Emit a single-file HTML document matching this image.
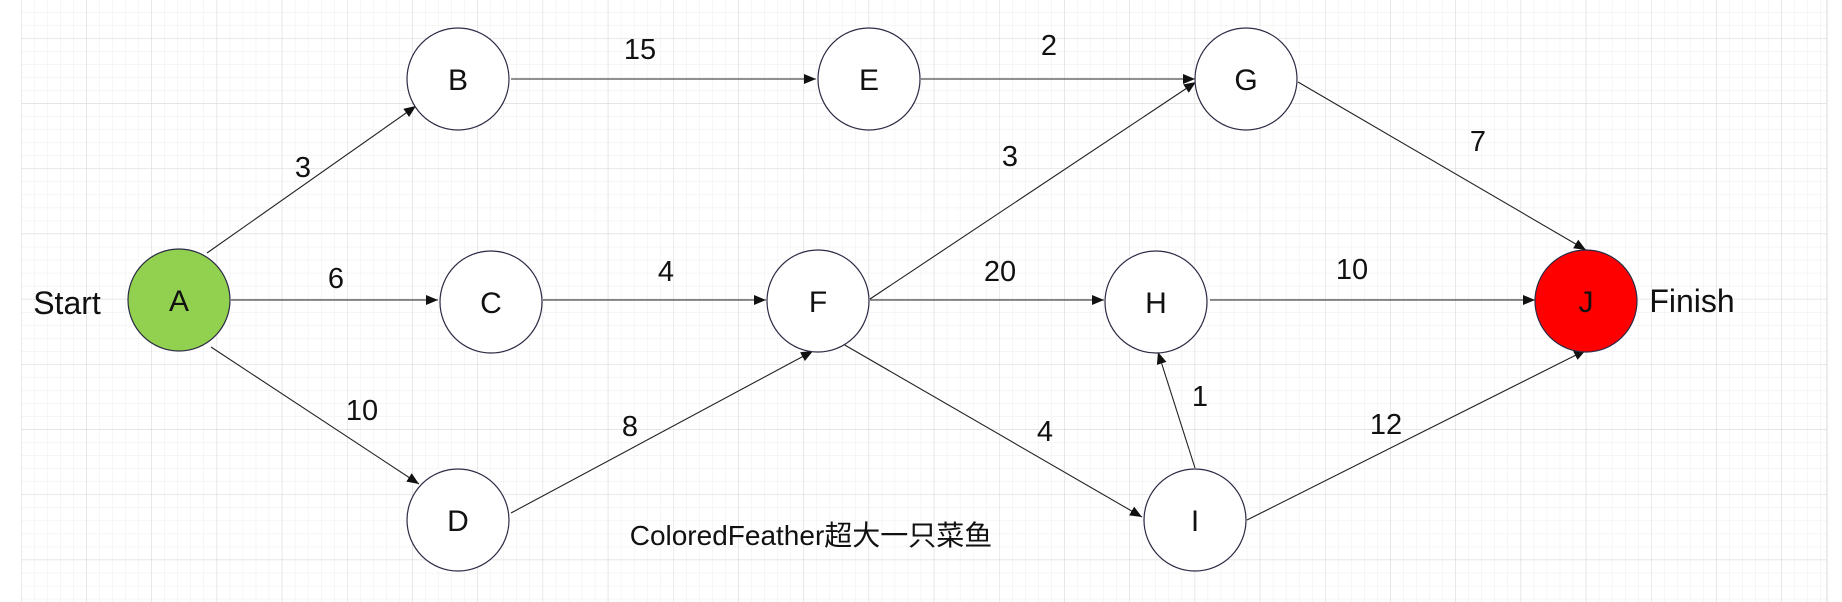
<!DOCTYPE html>
<html><head><meta charset="utf-8">
<style>
html,body{margin:0;padding:0;background:#fff;width:1842px;height:602px;overflow:hidden}
svg{display:block}
text{font-family:"Liberation Sans","Noto Sans CJK SC",sans-serif;fill:#111}
</style></head><body>
<svg width="1842" height="602" xmlns="http://www.w3.org/2000/svg">
<defs>
<pattern id="minor" x="21" y="-1" width="13.04" height="13.04" patternUnits="userSpaceOnUse">
<path d="M0 0H13.04M0 0V13.04" stroke="#ececec" stroke-width="1" fill="none"/>
</pattern>
<pattern id="major" x="21" y="38" width="65.2" height="65.2" patternUnits="userSpaceOnUse">
<path d="M0 0H65.2M0 0V65.2" stroke="#d8d8d8" stroke-width="1" fill="none"/>
</pattern>
<marker id="ar" viewBox="0 0 12 10" refX="12" refY="5" markerWidth="12" markerHeight="10" orient="auto" markerUnits="userSpaceOnUse">
<path d="M0 0L12 5L0 10z" fill="#111"/>
</marker>
</defs>
<rect x="21" y="0" width="1806" height="602" fill="url(#minor)"/>
<rect x="21" y="0" width="1806" height="602" fill="url(#major)"/>
<line x1="1827" y1="0" x2="1827" y2="602" stroke="#d8d8d8"/>
<g stroke="#222" stroke-width="1.1" fill="none" marker-end="url(#ar)">
<line x1="207" y1="253" x2="416" y2="106"/>
<line x1="231" y1="300" x2="438" y2="300"/>
<line x1="211" y1="347" x2="419" y2="484"/>
<line x1="511" y1="79" x2="816" y2="79"/>
<line x1="921" y1="79" x2="1195" y2="79"/>
<line x1="543" y1="300" x2="766" y2="300"/>
<line x1="511" y1="513" x2="813" y2="351"/>
<line x1="870" y1="299" x2="1196" y2="82"/>
<line x1="870" y1="300" x2="1104" y2="300"/>
<line x1="843" y1="344" x2="1142" y2="517"/>
<line x1="1195" y1="468" x2="1158" y2="352"/>
<line x1="1247" y1="520" x2="1586" y2="350"/>
<line x1="1298" y1="82" x2="1586" y2="250"/>
<line x1="1210" y1="300" x2="1535" y2="300"/>
</g>
<g stroke="#2b2b45" stroke-width="1.2">
<circle cx="179" cy="300" r="51" fill="#92d050"/>
<circle cx="458" cy="79" r="51" fill="#fff"/>
<circle cx="869" cy="79" r="51" fill="#fff"/>
<circle cx="1246" cy="79" r="51" fill="#fff"/>
<circle cx="491" cy="302" r="51" fill="#fff"/>
<circle cx="818" cy="301" r="51" fill="#fff"/>
<circle cx="1156" cy="302" r="51" fill="#fff"/>
<circle cx="1586" cy="301" r="51" fill="#ff0000"/>
<circle cx="458" cy="520" r="51" fill="#fff"/>
<circle cx="1195" cy="520" r="51" fill="#fff"/>
</g>
<g font-size="30" text-anchor="middle">
<text x="179" y="311">A</text>
<text x="458" y="90">B</text>
<text x="869" y="90">E</text>
<text x="1246" y="90">G</text>
<text x="491" y="313">C</text>
<text x="818" y="312">F</text>
<text x="1156" y="313">H</text>
<text x="1586" y="312">J</text>
<text x="458" y="531">D</text>
<text x="1195" y="531">I</text>
</g>
<text x="67" y="314" font-size="32" text-anchor="middle">Start</text>
<text x="1692" y="312" font-size="32" text-anchor="middle">Finish</text>
<g font-size="29" text-anchor="middle">
<text x="303" y="177">3</text>
<text x="336" y="288">6</text>
<text x="362" y="420">10</text>
<text x="640" y="59">15</text>
<text x="1049" y="55">2</text>
<text x="1010" y="166">3</text>
<text x="666" y="281">4</text>
<text x="1000" y="281">20</text>
<text x="1352" y="279">10</text>
<text x="1478" y="151">7</text>
<text x="630" y="436">8</text>
<text x="1200" y="406">1</text>
<text x="1045" y="441">4</text>
<text x="1386" y="434">12</text>
</g>
<text x="811" y="545" font-size="28" text-anchor="middle">ColoredFeather超大一只菜鱼</text>
</svg>
</body></html>
